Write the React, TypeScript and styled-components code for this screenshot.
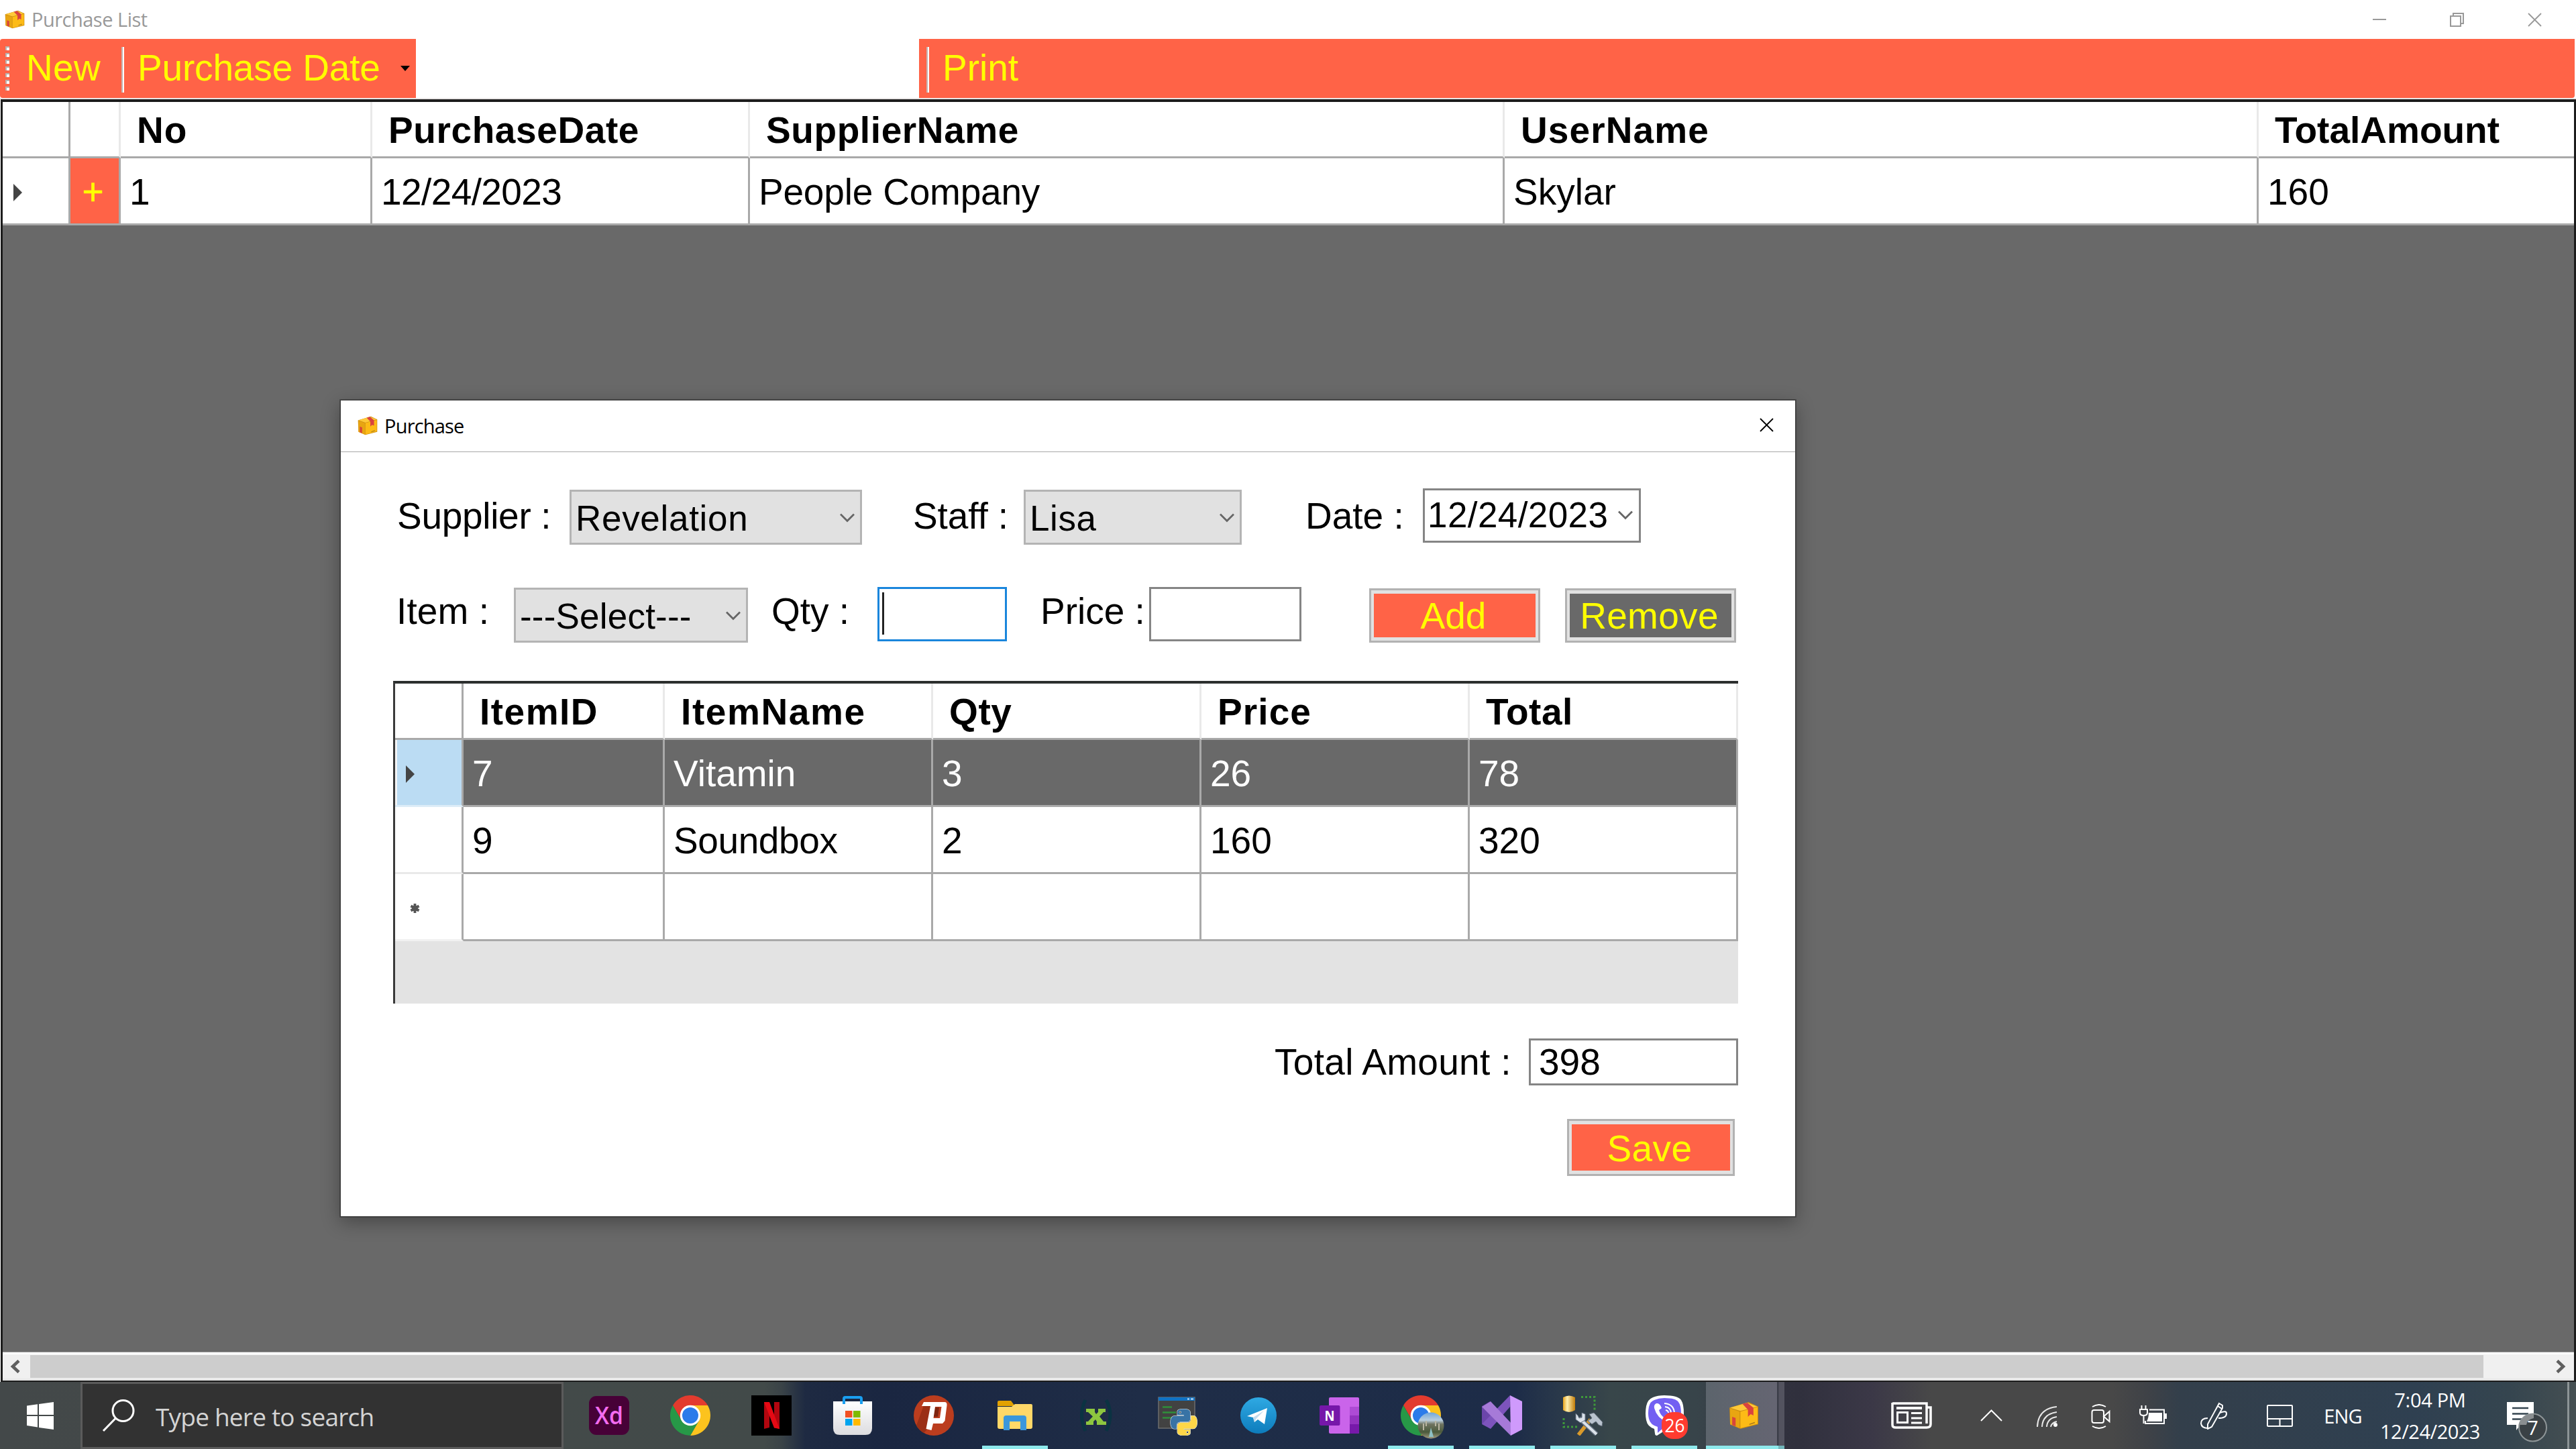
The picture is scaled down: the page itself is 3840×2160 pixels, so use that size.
import React from "react";
import styled, { createGlobalStyle, css } from "styled-components";

const TOMATO = "#ff6347";
const DIM = "#696969";
const LINE = "#a9a9a9";

const GlobalStyle = createGlobalStyle`
  *, *::before, *::after { box-sizing: border-box; }
  html, body { margin: 0; padding: 0; background: #fff; overflow: hidden; }
  body { font-family: "Liberation Sans", Arial, sans-serif; color: #000; }
`;

const Screen = styled.div`
  position: relative;
  width: 3840px;
  height: 2160px;
  display: flex;
  flex-direction: column;
  overflow: hidden;
  background: #fff;
`;

const Txt = styled.span<{ $ls?: number; $size?: number }>`
  font-size: ${(p) => p.$size ?? 55}px;
  line-height: 1;
  letter-spacing: ${(p) => p.$ls ?? 0}px;
  white-space: pre;
`;

const UiTxt = styled(Txt)`
  font-family: "Open Sans", "Noto Sans", sans-serif;
`;

/* ---------- main window ---------- */

const TitleBar = styled.header`
  display: flex;
  align-items: center;
  height: 58px;
  padding: 0 51px 0 7px;
  color: #999;
`;

const TitleText = styled(UiTxt)<{ $gap: number }>`
  margin-left: ${(p) => p.$gap}px;
  line-height: 40px;
`;

const WindowButtons = styled.div`
  display: flex;
  align-items: center;
  gap: 95px;
  margin-left: auto;
`;

const ToolRow = styled.div`
  display: flex;
  justify-content: space-between;
  height: 90px;
  padding: 0 2px 2px 0;
  background: linear-gradient(#fff 88px, #e9e6e6 88px);
`;

const ToolGroup = styled.div<{ $w: number; $first?: boolean }>`
  display: flex;
  align-items: center;
  width: ${(p) => p.$w}px;
  height: 88px;
  background: ${TOMATO};
  color: #ff0;
  border-radius: ${(p) => (p.$first ? "4px 0 0 4px" : "0 0 4px 0")};
`;

const Grip = styled.div`
  display: flex;
  flex-direction: column;
  gap: 4px;
  width: 7px;
  margin-left: 8px;
`;

const GripDot = styled.i`
  width: 6px;
  height: 6px;
  background: #fff;
  border-top: 2px solid #b9b1ae;
  border-left: 2px solid #b9b1ae;
`;

const ToolSep = styled.i<{ $ml: number }>`
  width: 4px;
  height: 68px;
  margin: 4px 0 0 ${(p) => p.$ml}px;
  background: #fff;
  border-left: 2px solid #c4b5b1;
`;

const ToolItem = styled(Txt)<{ $ml: number }>`
  margin-left: ${(p) => p.$ml}px;
  padding-bottom: 1px;
`;

const DropArrow = styled.i`
  margin: 0 9px 0 auto;
  border: 7px solid transparent;
  border-top: 8px solid #000;
  border-bottom: 0;
`;

const Client = styled.main`
  flex: none;
  display: flex;
  flex-direction: column;
  height: 1912px;
  margin-left: 1px;
  border: solid #1c1c1c;
  border-width: 4px 3px 2px 3px;
  background: ${DIM};
`;

const GridRow = styled.div<{ $h: number; $cols: string; $selected?: boolean }>`
  display: grid;
  grid-template-columns: ${(p) => p.$cols};
  height: ${(p) => p.$h}px;
  color: ${(p) => (p.$selected ? "#fff" : "#000")};
  background: ${(p) => (p.$selected ? DIM : "#fff")};
`;

const Cell = styled.div<{ $noEdge?: boolean }>`
  display: flex;
  align-items: center;
  padding: 4px 0 0 13px;
  border-right: ${(p) => (p.$noEdge ? 0 : 3)}px solid ${LINE};
  border-bottom: 3px solid ${LINE};
`;

const HeadCell = styled(Cell)<{ $strong?: boolean }>`
  padding: 3px 0 0 24px;
  font-weight: bold;
  border-right-color: ${(p) => (p.$strong ? LINE : "#e9e9e9")};
`;

const RowHead = styled(Cell)<{ $blue?: boolean; $line?: string; $pad: number }>`
  padding-left: ${(p) => p.$pad}px;
  background: ${(p) => (p.$blue ? "#bbdcf3" : "#fff")};
  border-bottom-color: ${(p) => p.$line ?? LINE};
  ${(p) =>
    p.$blue &&
    css`
      border-bottom-color: #dcecf7;
      box-shadow: inset 3px 0 #f4f4f4;
    `}
`;

const PlusCell = styled(Cell)`
  justify-content: center;
  padding: 4px 5px 0 0;
  background: ${TOMATO};
  color: #ff0;
  -webkit-text-stroke: 0.6px #ff0;
`;

const RowMarker = styled.i`
  width: 0;
  height: 0;
  border: 13px solid transparent;
  border-left: 13px solid #444;
  border-right: 0;
`;

const ScrollBar = styled.div`
  display: flex;
  height: 43px;
  margin-top: auto;
  padding: 4px 0 4px;
  border-top: 1px solid #a0a0a0;
  background: #f0f0f0;
  box-shadow: inset 0 3px #fff, inset 0 -3px #e6e6e6;
`;

const ScrollButton = styled.div<{ $back?: boolean }>`
  display: flex;
  align-items: center;
  justify-content: center;
  width: 41px;
  padding-right: ${(p) => (p.$back ? 3 : 0)}px;
`;

const Thumb = styled.div`
  width: 3657px;
  background: #cdcdcd;
`;

const Trough = styled.div`
  flex: 1;
`;

/* ---------- purchase dialog ---------- */

const Dialog = styled.section`
  position: absolute;
  left: 507px;
  top: 596px;
  width: 2170px;
  height: 1218px;
  display: flex;
  flex-direction: column;
  background: #fff;
  border: 1px solid #3c3c3c;
  box-shadow: 0 0 0 1px rgba(50, 50, 50, 0.5), 0 8px 26px rgba(0, 0, 0, 0.32);
`;

const DialogTitle = styled.header`
  display: flex;
  align-items: center;
  height: 77px;
  padding: 0 32px 1px 25px;
  border-bottom: 1px solid #a8a8a8;
`;

const DialogClose = styled.div`
  margin-left: auto;
  margin-bottom: 3px;
  display: flex;
`;

const DialogBody = styled.div`
  display: flex;
  flex-direction: column;
  padding: 53px 85px 0 78px;
`;

const FormRow = styled.div<{ $h: number; $mt?: number }>`
  display: flex;
  align-items: center;
  height: ${(p) => p.$h}px;
  margin-top: ${(p) => p.$mt ?? 0}px;
`;

const Label = styled(Txt)<{ $w: number; $ml: number; $lift: number }>`
  flex: none;
  width: ${(p) => p.$w}px;
  margin-left: ${(p) => p.$ml}px;
  padding-bottom: ${(p) => p.$lift}px;
`;

const Select = styled.div<{ $w: number }>`
  flex: none;
  display: flex;
  align-items: center;
  justify-content: space-between;
  width: ${(p) => p.$w}px;
  height: 82px;
  padding: 2px 8px 0 6px;
  border: 3px solid #b4b4b4;
  background: #e1e1e1;
`;

const DatePicker = styled(Select)`
  height: 81px;
  margin-bottom: 6px;
  padding: 0 9px 1px 4px;
  background: #fff;
  border-color: #858585;
`;

const Input = styled.div<{ $w: number; $h?: number; $focus?: boolean }>`
  flex: none;
  display: flex;
  align-items: center;
  width: ${(p) => p.$w}px;
  height: ${(p) => p.$h ?? 81}px;
  margin-bottom: ${(p) => (p.$h ? 0 : 3)}px;
  padding: ${(p) => (p.$h ? "1px 0 0 12px" : "0 0 0 4px")};
  border: 3px solid ${(p) => (p.$focus ? "#1a86dc" : "#858585")};
  background: #fff;
`;

const Caret = styled.i`
  width: 3px;
  height: 63px;
  margin-bottom: 3px;
  background: #222;
`;

const Button = styled.div<{ $w: number; $h: number; $ml?: number; $dark?: boolean }>`
  flex: none;
  display: flex;
  width: ${(p) => p.$w}px;
  height: ${(p) => p.$h}px;
  margin-left: ${(p) => p.$ml ?? 0}px;
  padding: 5px 4px;
  border: 3px solid #b2b2b2;
  background: #e1e1e1;

  > span {
    flex: 1;
    display: flex;
    align-items: center;
    justify-content: center;
    padding: 3px 4px 0 0;
    color: #ff0;
    background: ${(p) => (p.$dark ? DIM : TOMATO)};
  }
`;

const ItemTable = styled.div`
  height: 481px;
  margin-top: 53px;
  border-left: 3px solid #3a3a3a;
  border-top: 4px solid #2c2f2e;
  background: #e3e3e3;
`;

const TotalRow = styled.div`
  display: flex;
  align-items: center;
  justify-content: flex-end;
  height: 70px;
  margin-top: 52px;
`;

const SaveRow = styled.div`
  display: flex;
  justify-content: flex-end;
  margin-top: 50px;
  padding-right: 5px;
`;

/* ---------- taskbar ---------- */

const TaskBar = styled.footer`
  flex: none;
  display: flex;
  height: 100px;
  color: #fff;
  background: linear-gradient(
    90deg,
    #434849 0,
    #444a49 500px,
    #424a49 1140px,
    #3a4347 1165px,
    #1e2a42 1200px,
    #1a2641 1320px,
    #1f2d47 1700px,
    #1d2c48 2260px,
    #27364a 2310px,
    #38464a 2400px,
    #38444a 2530px,
    #34343f 2600px,
    #30303d 2680px,
    #3b3847 2790px,
    #484848 2880px,
    #484848 3150px,
    #3f4247 3200px,
    #333f4b 3250px,
    #2f4051 3600px,
    #35454f 3740px,
    #454f52 3840px
  );
`;

const StartButton = styled.div`
  display: flex;
  align-items: center;
  width: 120px;
  padding-left: 40px;
`;

const SearchBox = styled.div`
  display: flex;
  align-items: center;
  width: 720px;
  padding-left: 29px;
  border: 3px solid #5b5b5b;
  background: #323232;
  color: #d4d4d4;
`;

const SearchText = styled(UiTxt)`
  margin-left: 30px;
  line-height: 60px;
  padding-top: 4px;
`;

const Apps = styled.div`
  display: flex;
  margin-left: 7.5px;
`;

const TaskApp = styled.div<{ $open?: boolean; $active?: boolean }>`
  display: flex;
  align-items: center;
  justify-content: center;
  width: 121px;
  height: 100px;
  ${(p) =>
    p.$open &&
    css`
      background: linear-gradient(#8ee9ec, #8ee9ec) center bottom / 98px 5px no-repeat;
    `}
  ${(p) =>
    p.$active &&
    css`
      padding-right: 5px;
      background: linear-gradient(#8ee9ec, #8ee9ec) 1px 100% / 108px 5px no-repeat,
        linear-gradient(#72b6bb, #72b6bb) 109px 100% / 9px 5px no-repeat,
        linear-gradient(90deg, transparent 1px, #5c646c 1px, #656572 107px, #3c3e49 107px, #3c3e49 109px, #53535f 110px, #53535f 118px, transparent 118px);
    `}
`;

const TrayItem = styled.div<{ $ml: number; $w: number; $mt?: number }>`
  flex: none;
  display: flex;
  align-items: center;
  justify-content: center;
  width: ${(p) => p.$w}px;
  margin-left: ${(p) => p.$ml}px;
  padding-top: ${(p) => p.$mt ?? 0}px;
`;

const Clock = styled(TrayItem)`
  flex-direction: column;
  gap: 7px;
  padding-top: 1px;
`;

const ClockLine = styled(UiTxt)`
  line-height: 40px;
`;

const PeekBar = styled.i`
  width: 3px;
  margin-left: auto;
  margin-right: 10px;
  background: #8c9496;
`;

/* ---------- drawings ---------- */

const BoxIcon = ({ w, h }: { w: number; h: number }) => (
  <svg width={w} height={h} viewBox="0 0 44 44" preserveAspectRatio="none">
    <path d="M1 10 L29 1 L43 8 L43 36 L17 43 L2 36Z" fill="#c98a12" />
    <path d="M2 10 L27 2 L42 8 L17 15Z" fill="#ffc938" />
    <path d="M2 11 L16 16 L16 42 L2 36Z" fill="#e8a512" />
    <path d="M17 16 L42 9 L42 35 L17 42Z" fill="#fdbb16" />
    <path d="M20 4 L27 2 L36 10 L36 22 L32 20 L28 24 L28 13Z" fill="#d9433f" />
    <path d="M5 24 L10 26 L10 39 L5 37Z" fill="#d8453c" />
    <path d="M30 36 L38 33" stroke="#a9791a" strokeWidth="1.5" />
  </svg>
);

const CloseX = ({ color }: { color: string }) => (
  <svg width="21" height="21" viewBox="0 0 21 21">
    <path d="M1 1 L20 20 M20 1 L1 20" stroke={color} strokeWidth="1.8" fill="none" />
  </svg>
);

const Chevron = () => (
  <svg width="22" height="14" viewBox="0 0 22 14">
    <path d="M1 1.5 L11 11.5 L21 1.5" stroke="#666" strokeWidth="2.8" fill="none" />
  </svg>
);

const ScrollArrow = ({ right }: { right?: boolean }) => (
  <svg width="18" height="20" viewBox="0 0 18 20">
    <path
      d={right ? "M4 1.5 L13 10 L4 18.5" : "M14 1.5 L5 10 L14 18.5"}
      stroke="#5f5f5f"
      strokeWidth="4.6"
      fill="none"
    />
  </svg>
);

const Asterisk = () => (
  <svg width="15" height="16" viewBox="0 0 15 16">
    <circle cx="7.5" cy="8" r="4.5" fill="#555" />
    <path d="M7.5 1 V15 M1.5 4.5 L13.5 11.5 M13.5 4.5 L1.5 11.5" stroke="#555" strokeWidth="3.8" />
  </svg>
);

const ChromeShape = () => (
  <g>
    <path d="M4 15 A30 30 0 0 1 56 15 L30 15 L17 37.5Z" fill="#e33b2e" />
    <path d="M56 15 A30 30 0 0 1 30 60 L43 37.5 L30 15Z" fill="#fcc31e" />
    <path d="M30 60 A30 30 0 0 1 4 15 L17 37.5 L43 37.5Z" fill="#279847" />
    <circle cx="30" cy="30" r="15.2" fill="#fff" />
    <circle cx="30" cy="30" r="12" fill="#2b7bea" />
  </g>
);

const XdIcon = () => (
  <svg width="60" height="60" viewBox="0 0 60 60">
    <rect y="1" width="60" height="58" rx="11" fill="#470137" />
    <text
      x="30"
      y="43"
      textAnchor="middle"
      textLength="42"
      lengthAdjust="spacingAndGlyphs"
      fontFamily="Open Sans, sans-serif"
      fontWeight="600"
      fontSize="36"
      fill="#f36cf0"
    >
      Xd
    </text>
  </svg>
);

const NetflixIcon = () => (
  <svg width="60" height="60" viewBox="0 0 60 60">
    <rect width="60" height="60" fill="#000" />
    <path d="M19 10 H27 V48 L19 50Z M34 10 H42 V50 L34 48Z" fill="#b1060f" />
    <path d="M19 10 H27 L42 50 L34 48.5Z" fill="#e50914" />
  </svg>
);

const StoreIcon = () => (
  <svg width="60" height="60" viewBox="0 0 60 60">
    <defs>
      <linearGradient id="bag" x1="0" y1="0" x2="0" y2="1">
        <stop offset="0" stopColor="#fff" />
        <stop offset="1" stopColor="#dcdcdf" />
      </linearGradient>
    </defs>
    <path d="M1 9 H59 V49 Q59 59 49 59 H11 Q1 59 1 49Z" fill="url(#bag)" />
    <path d="M17 13 V5 Q17 3 19 3 H41 Q43 3 43 5 V13" stroke="#1a9ff0" strokeWidth="4" fill="none" />
    <rect x="19" y="23" width="10.5" height="10" fill="#f25022" />
    <rect x="31" y="23" width="10.5" height="10" fill="#7fba00" />
    <rect x="19" y="35" width="10.5" height="10" fill="#00a4ef" />
    <rect x="31" y="35" width="10.5" height="10" fill="#ffb900" />
  </svg>
);

const PIcon = () => (
  <svg width="60" height="60" viewBox="0 0 60 60">
    <circle cx="30" cy="30" r="30" fill="#bb3d1e" />
    <path d="M15 15 L4 45 Q8 52 15 56 L22 49 L27 15Z" fill="#9b2f15" />
    <path d="M29 18 H38 L36 32 H27Z" fill="#7e2510" />
    <path
      fillRule="evenodd"
      d="M15 10 H46 Q50 10 49.500 15 L46.500 38 L43 42 H29 L26.500 52 L18.500 50 L25 16 H12Z M32 17 L29.500 34 H39 L41.500 17Z"
      fill="#fff"
    />
  </svg>
);

const FolderIcon = () => (
  <svg width="54" height="46" viewBox="0 0 54 46">
    <path d="M1 3 Q1 1 3 1 H21 L27 9 H1Z" fill="#e3a200" />
    <path d="M1 10 L22 10 L27 6 H51 Q53 6 53 8 V40 Q53 43 50 43 H4 Q1 43 1 40Z" fill="#ffd868" />
    <path d="M10 45 V27 Q10 23 14 23 H40 Q44 23 44 27 V45 H35 V32 H19 V45Z" fill="#3a97dc" />
  </svg>
);

const GreenXIcon = () => (
  <svg width="60" height="60" viewBox="0 0 60 60">
    <path d="M14 7 Q3 29 14 53 M45 7 Q57 29 45 53" stroke="#0b3342" strokeWidth="5" fill="none" />
    <path
      d="M15 20 H28 V25 L30 28 L33 25 V20 H44 V25 H41 L35 31.500 L41 39 H45 V44 H31 V39 L29 36 L26 39 V44 H15 V39 H18 L25 31.500 L18 25 H15Z"
      fill="#8dc63f"
    />
  </svg>
);

const PY_PATH =
  "M14.25.18l.9.2.73.26.59.3.45.32.34.34.25.34.16.33.1.3.04.26.02.2-.01.13V8.5l-.05.63-.13.55-.21.46-.26.38-.3.31-.33.25-.35.19-.35.14-.33.1-.3.07-.26.04-.21.02H8.77l-.69.05-.59.14-.5.22-.41.27-.33.32-.27.35-.2.36-.15.37-.1.35-.07.32-.04.27-.02.21v3.06H3.17l-.21-.03-.28-.07-.32-.12-.35-.18-.36-.26-.36-.36-.35-.46-.32-.59-.28-.73-.21-.88-.14-1.05-.05-1.23.06-1.22.16-1.04.24-.87.32-.71.36-.57.4-.44.42-.33.42-.24.4-.16.36-.1.32-.05.24-.01h.16l.06.01h8.16v-.83H6.18l-.01-2.75-.02-.37.05-.34.11-.31.17-.28.25-.26.31-.23.38-.2.44-.18.51-.15.58-.12.64-.1.71-.06.77-.04.84-.02 1.27.05zm-6.3 1.98l-.23.33-.08.41.08.41.23.34.33.22.41.09.41-.09.33-.22.23-.34.08-.41-.08-.41-.23-.33-.33-.22-.41-.09-.41.09z";

const PythonIcon = () => (
  <svg width="60" height="60" viewBox="0 0 60 60">
    <rect x="2" y="3" width="54" height="46" fill="#424242" stroke="#6d6d6d" strokeWidth="1.500" />
    <rect x="2" y="3" width="54" height="5" fill="#0f72c4" />
    <path d="M45 5.500 h3 M50 5.500 h4" stroke="#cfe4f6" strokeWidth="2" />
    <path d="M8 17.500 H22 M8 25.500 H28 M8 33.500 H22" stroke="#2f8f3a" strokeWidth="2.600" />
    <g transform="translate(20 20.500) scale(1.640)" stroke="#e8eef2" strokeWidth="0.700" paintOrder="stroke">
      <path d={PY_PATH} fill="#3873a5" />
      <path d={PY_PATH} fill="#ffd748" transform="rotate(180 12 12)" />
    </g>
  </svg>
);

const TelegramIcon = () => (
  <svg width="54" height="54" viewBox="0 0 54 54">
    <defs>
      <linearGradient id="tg" x1="0" y1="0" x2="0" y2="1">
        <stop offset="0" stopColor="#2fa9e3" />
        <stop offset="1" stopColor="#0d7cbc" />
      </linearGradient>
    </defs>
    <circle cx="27" cy="27" r="27" fill="url(#tg)" />
    <path d="M10 28 L40 16 L36 40 L26 33 L21 37 L19 30Z" fill="#fff" />
    <path d="M19 30 L35 20 L23.500 32 L21 37Z" fill="#c3dcee" />
  </svg>
);

const OneNoteIcon = () => (
  <svg width="60" height="54" viewBox="0 0 60 54">
    <rect x="14" width="45" height="54" rx="2" fill="#ca64ea" />
    <rect x="45" y="14" width="14" height="13" fill="#ae4bd5" />
    <rect x="45" y="27" width="14" height="13" fill="#9332bf" />
    <path d="M45 40 H59 V52 Q59 54 57 54 H45Z" fill="#7719aa" />
    <rect y="12" width="30.500" height="30" rx="2" fill="#7617a9" />
    <text
      x="15"
      y="34.500"
      textAnchor="middle"
      textLength="15"
      lengthAdjust="spacingAndGlyphs"
      fontFamily="Open Sans, sans-serif"
      fontWeight="700"
      fontSize="22"
      fill="#fff"
    >
      N
    </text>
  </svg>
);

const ChromeIcon = () => (
  <svg width="60" height="60" viewBox="0 0 60 60">
    <ChromeShape />
  </svg>
);

const ChromeProfileIcon = () => (
  <svg width="60" height="60" viewBox="0 0 60 60" overflow="visible">
    <defs>
      <linearGradient id="avatar" x1="0" y1="0" x2="0" y2="1">
        <stop offset="0" stopColor="#6fa6dc" />
        <stop offset=".3" stopColor="#b9cede" />
        <stop offset=".45" stopColor="#6f7360" />
        <stop offset=".75" stopColor="#4b5a3c" />
        <stop offset="1" stopColor="#a39b80" />
      </linearGradient>
    </defs>
    <ChromeShape />
    <circle cx="45" cy="45" r="19.500" fill="url(#avatar)" />
    <path d="M34 42 V52 M38 38 V46 M52 38 V46 M57 42 V52" stroke="#b9b5a2" strokeWidth="2" />
    <path d="M42 62 L45 48 L49 62Z" fill="#8fc0c4" />
  </svg>
);

const VisualStudioIcon = () => (
  <svg width="60" height="60" viewBox="0 0 60 60">
    <path d="M0 16 L12 9 L0 42Z" fill="#52308f" />
    <path d="M0 16 L13 27 V34 L0 43Z" fill="#6b45ab" />
    <path d="M0 43 L42 0 V17 L13 50Z" fill="#7d54bd" />
    <path d="M0 17 L13 9 L46 44 L43 60Z" fill="#a67ad8" />
    <path d="M42 0 L60 9 V51 L43 60Z" fill="#cf9afc" />
  </svg>
);

const SqlToolsIcon = () => (
  <svg width="62" height="60" viewBox="0 0 62 60">
    <defs>
      <linearGradient id="cyl" x1="0" x2="1">
        <stop offset="0" stopColor="#e7a21a" />
        <stop offset=".35" stopColor="#fff0b0" />
        <stop offset="1" stopColor="#c27c08" />
      </linearGradient>
    </defs>
    <path d="M1 3 Q10 -2 19 3 V22 Q10 28 1 22Z" fill="url(#cyl)" />
    <path d="M28 2.500 H48 V22 M2 34 V47 H22" stroke="#3f9a3a" strokeWidth="3" strokeDasharray="3 3" fill="none" />
    <path d="M24 59 L42 36" stroke="#d99a2b" strokeWidth="5.500" />
    <path d="M40 28 L47 26 L60 40 L59 46 L54 44 L50 39 L44 43 L38 38 L44 34Z" fill="#b9c3cf" stroke="#5f6b78" />
    <path d="M25 34 L51 58" stroke="#667383" strokeWidth="7" />
    <path d="M25 34 L51 58" stroke="#dbe2ea" strokeWidth="4" />
    <path d="M20 27 V36 L27 41 L34 37 L34 28 L29 26 L29 33 L25 34 L23 30Z" fill="#dbe2ea" stroke="#667383" />
  </svg>
);

const ViberIcon = () => (
  <svg width="60" height="60" viewBox="0 0 60 60" overflow="visible">
    <path
      d="M30 0 Q50 0 55 7 Q59 13 59 27 Q59 41 54 47 Q48 53 30 53 L19 60 Q16 60 16 57 L15 50 Q5 47 3 37 Q1 27 3 16 Q5 6 13 3 Q20 0 30 0Z"
      fill="#fff"
    />
    <path
      d="M30 4 Q47 4 51 10 Q55 15 55 27 Q55 38 50 43 Q45 48 29 48 L20 56 V47 Q9 44 7 35 Q5 27 7 17 Q9 9 15 7 Q22 4 30 4Z"
      fill="#7360f2"
    />
    <path
      d="M18 12 Q14 14 15 19 Q19 34 34 40 Q39 42 41 36 Q40 32 34 31 L31 34 Q24 30 22 22 L26 19 Q24 13 20 12Z"
      fill="#fff"
    />
    <path
      d="M30 12 Q45 13 45 28 M31 17 Q40 18 40 27 M32 22 Q36 23 36 26"
      stroke="#fff"
      strokeWidth="2"
      fill="none"
    />
    <rect x="26" y="25" width="39" height="40" rx="17" fill="#ff3b30" />
    <text
      x="45.500"
      y="55"
      textAnchor="middle"
      textLength="30"
      lengthAdjust="spacingAndGlyphs"
      fontFamily="Open Sans, sans-serif"
      fontSize="28"
      fill="#fff"
    >
      26
    </text>
  </svg>
);

const NewsIcon = () => (
  <svg width="61" height="41" viewBox="0 0 61 41" fill="none" stroke="#fff">
    <path d="M2 2 H53 V32 M2 1 V34 Q2 38 7 38 H53 Q59 38 59 33 V8 H53" strokeWidth="3.500" />
    <path d="M8 9 H46" strokeWidth="4" />
    <rect x="9.500" y="15.500" width="15" height="15" strokeWidth="3" />
    <path d="M30 16.500 H46 M30 24 H46 M30 31 H46" strokeWidth="3" />
  </svg>
);

const TrayChevron = () => (
  <svg width="33" height="18" viewBox="0 0 33 18" fill="none">
    <path d="M1 17 L16.500 1.500 L32 17" stroke="#fff" strokeWidth="2" />
  </svg>
);

const WifiIcon = () => (
  <svg width="32" height="32" viewBox="0 0 32 32" fill="none" stroke="#e8e8e8" strokeWidth="2">
    <path d="M1 31 Q2 4 30 1" />
    <path d="M8 31 Q9 12 30 9" />
    <path d="M15 31 Q16 18 30 16" />
    <path d="M21 31 Q22 25 30 23" />
    <circle cx="28" cy="28" r="3" fill="#fff" stroke="none" />
  </svg>
);

const CameraIcon = () => (
  <svg width="30" height="37" viewBox="0 0 30 37" fill="none" stroke="#fff" strokeWidth="2">
    <rect x="1.500" y="9" width="17.500" height="19" rx="3" />
    <path d="M19 18.500 L27.500 11 V26Z" />
    <path d="M2 4 Q12 -2 22 4 M2 33 Q12 39 22 33" />
  </svg>
);

const BatteryIcon = () => (
  <svg width="42" height="30" viewBox="0 0 42 30" fill="none" stroke="#fff">
    <path d="M15 6.500 H37 V27 H9 V23" strokeWidth="2" />
    <path d="M39.500 12 V20" strokeWidth="3" />
    <path d="M14 11 H34 V24 H11 Q14 19 14 11Z" fill="#fff" stroke="none" />
    <path d="M1 6 H12 V11 Q12 15 6.500 15 Q1 15 1 11Z" strokeWidth="2" />
    <path d="M3.500 0 V6 M9.500 0 V6 M6.500 15 V27" strokeWidth="2" />
  </svg>
);

const PenIcon = () => (
  <svg width="42" height="41" viewBox="0 0 42 41" fill="none" stroke="#fff" strokeWidth="2">
    <path d="M29 2 L34 5 V9 L18 37 L12 40 L12 33Z M27 6 L33 10" />
    <path d="M12 24 Q2 24 2 32 Q3 39 12 39 M30 16 Q40 12 40 17 Q40 24 28 24" />
  </svg>
);

const TouchpadIcon = () => (
  <svg width="40" height="33" viewBox="0 0 40 33" fill="none" stroke="#fff" strokeWidth="2">
    <rect x="1" y="1" width="37" height="31" rx="1" />
    <path d="M1 21 H38 M19.500 21 V32" />
  </svg>
);

const NotificationIcon = () => (
  <svg width="62" height="62" viewBox="0 0 62 62">
    <path d="M0 0 H40 V34 H20 L14 42 V34 H0Z" fill="#fff" />
    <path d="M8 9 H32 M8 17.500 H32 M8 25.500 H24" stroke="#34444f" strokeWidth="2.600" />
    <circle cx="38.500" cy="38" r="20.500" fill="#3a4145" stroke="#8e9597" strokeWidth="2" />
    <path d="M19 34 A20 20 0 0 1 40 18 V24 Q30 26 29 34Z" fill="#8a8e90" />
    <text x="38.500" y="49" textAnchor="middle" fontFamily="Open Sans, sans-serif" fontSize="29" fill="#fff">
      7
    </text>
  </svg>
);

/* ---------- data ---------- */

const MAIN_COLS = "101px 75px 375px 563px 1125px 1124px 1fr";
const ITEM_COLS = "102px 300px 400px 400px 400px 400px";

const mainHeads: [string, number][] = [
  ["No", 1],
  ["PurchaseDate", 0.6],
  ["SupplierName", 0.6],
  ["UserName", 1.1],
  ["TotalAmount", 0],
];
const mainRow: [string, number][] = [
  ["1", 0],
  ["12/24/2023", -0.6],
  ["People Company", -0.2],
  ["Skylar", 0],
  ["160", 0],
];
const itemHeads: [string, number][] = [
  ["ItemID", 1.5],
  ["ItemName", 1.6],
  ["Qty", 0.6],
  ["Price", 1.1],
  ["Total", 0.5],
];
const itemRows: string[][] = [
  ["7", "Vitamin", "3", "26", "78"],
  ["9", "Soundbox", "2", "160", "320"],
  ["", "", "", "", ""],
];

export default function App() {
  return (
    <Screen>
      <GlobalStyle />
      <TitleBar>
        <BoxIcon w={30} h={28} />
        <TitleText $size={29} $ls={-0.5} $gap={10}>
          Purchase List
        </TitleText>
        <WindowButtons>
          <svg width="20" height="20" viewBox="0 0 20 20">
            <path d="M0 10 H20" stroke="#999" strokeWidth="2" />
          </svg>
          <svg width="21" height="21" viewBox="0 0 21 21" fill="none" stroke="#999" strokeWidth="2">
            <path d="M1 5 H16 V20 H1Z M5 5 V1 H20 V16 H16" />
          </svg>
          <CloseX color="#999" />
        </WindowButtons>
      </TitleBar>

      <ToolRow>
        <ToolGroup $w={620} $first>
          <Grip>
            {Array.from({ length: 7 }, (_, i) => (
              <GripDot key={i} />
            ))}
          </Grip>
          <ToolItem $ml={24} $ls={0.3}>
            New
          </ToolItem>
          <ToolSep $ml={31} />
          <ToolItem $ml={20} $ls={-0.15}>
            Purchase Date
          </ToolItem>
          <DropArrow />
        </ToolGroup>
        <ToolGroup $w={2468}>
          <ToolSep $ml={11} />
          <ToolItem $ml={20}>Print</ToolItem>
        </ToolGroup>
      </ToolRow>

      <Client>
        <GridRow $h={84} $cols={MAIN_COLS}>
          <HeadCell $strong />
          <HeadCell />
          {mainHeads.map(([t, ls], i) => (
            <HeadCell key={t} $noEdge={i === 4}>
              <Txt $ls={ls}>{t}</Txt>
            </HeadCell>
          ))}
        </GridRow>
        <GridRow $h={100} $cols={MAIN_COLS}>
          <RowHead $pad={16}>
            <RowMarker />
          </RowHead>
          <PlusCell>
            <Txt>+</Txt>
          </PlusCell>
          {mainRow.map(([t, ls], i) => (
            <Cell key={t} $noEdge={i === 4}>
              <Txt $ls={ls}>{t}</Txt>
            </Cell>
          ))}
        </GridRow>
        <ScrollBar>
          <ScrollButton $back>
            <ScrollArrow />
          </ScrollButton>
          <Thumb />
          <Trough />
          <ScrollButton>
            <ScrollArrow right />
          </ScrollButton>
        </ScrollBar>
      </Client>

      <TaskBar>
        <StartButton>
          <svg width="40" height="41" viewBox="0 0 40 41" fill="#fff">
            <path d="M0 5.500 L16 3.200 V19 H0Z M18 3 L40 0 V19 H18Z M0 21 H16 V37.500 L0 35Z M18 21 H40 V41 L18 38Z" />
          </svg>
        </StartButton>
        <SearchBox>
          <svg width="50" height="50" viewBox="0 0 50 50" fill="none" stroke="#fff" strokeWidth="3">
            <circle cx="31.500" cy="18" r="15.500" />
            <path d="M20.500 29 L2 48" />
          </svg>
          <SearchText $size={37} $ls={-0.8}>
            Type here to search
          </SearchText>
        </SearchBox>
        <Apps>
          <TaskApp><XdIcon /></TaskApp>
          <TaskApp><ChromeIcon /></TaskApp>
          <TaskApp><NetflixIcon /></TaskApp>
          <TaskApp><StoreIcon /></TaskApp>
          <TaskApp><PIcon /></TaskApp>
          <TaskApp $open><FolderIcon /></TaskApp>
          <TaskApp><GreenXIcon /></TaskApp>
          <TaskApp><PythonIcon /></TaskApp>
          <TaskApp><TelegramIcon /></TaskApp>
          <TaskApp><OneNoteIcon /></TaskApp>
          <TaskApp $open><ChromeProfileIcon /></TaskApp>
          <TaskApp $open><VisualStudioIcon /></TaskApp>
          <TaskApp $open><SqlToolsIcon /></TaskApp>
          <TaskApp $open><ViberIcon /></TaskApp>
          <TaskApp $active><BoxIcon w={45} h={42} /></TaskApp>
        </Apps>
        <TrayItem $ml={156} $w={61}><NewsIcon /></TrayItem>
        <TrayItem $ml={72} $w={33}><TrayChevron /></TrayItem>
        <TrayItem $ml={51} $w={32} $mt={4}><WifiIcon /></TrayItem>
        <TrayItem $ml={49} $w={30} $mt={2}><CameraIcon /></TrayItem>
        <TrayItem $ml={42} $w={42}><BatteryIcon /></TrayItem>
        <TrayItem $ml={48} $w={42}><PenIcon /></TrayItem>
        <TrayItem $ml={58} $w={40}><TouchpadIcon /></TrayItem>
        <TrayItem $ml={41} $w={66}>
          <UiTxt $size={29} $ls={-0.8}>ENG</UiTxt>
        </TrayItem>
        <Clock $ml={12} $w={170}>
          <ClockLine $size={29} $ls={-0.3}>7:04 PM</ClockLine>
          <ClockLine $size={29} $ls={-0.5}>12/24/2023</ClockLine>
        </Clock>
        <TrayItem $ml={29} $w={62} $mt={22}><NotificationIcon /></TrayItem>
        <PeekBar />
      </TaskBar>

      <Dialog>
        <DialogTitle>
          <BoxIcon w={30} h={29} />
          <TitleText $size={29} $ls={-0.8} $gap={10}>
            Purchase
          </TitleText>
          <DialogClose>
            <CloseX color="#000" />
          </DialogClose>
        </DialogTitle>
        <DialogBody>
          <FormRow $h={88}>
            <Label $ml={6} $w={257} $lift={4} $ls={-0.3}>Supplier :</Label>
            <Select $w={436}>
              <Txt $size={53} $ls={0.7}>Revelation</Txt>
              <Chevron />
            </Select>
            <Label $ml={76} $w={165} $lift={4} $ls={-0.1}>Staff :</Label>
            <Select $w={325}>
              <Txt $size={53} $ls={0.6}>Lisa</Txt>
              <Chevron />
            </Select>
            <Label $ml={95} $w={175} $lift={4}>Date :</Label>
            <DatePicker $w={325}>
              <Txt $size={53} $ls={0.4}>12/24/2023</Txt>
              <Chevron />
            </DatePicker>
          </FormRow>

          <FormRow $h={90} $mt={57}>
            <Label $ml={5} $w={175} $lift={12} $ls={0.1}>Item :</Label>
            <Select $w={349}>
              <Txt $size={53} $ls={0.2}>---Select---</Txt>
              <Chevron />
            </Select>
            <Label $ml={35} $w={158} $lift={12}>Qty :</Label>
            <Input $w={193} $focus>
              <Caret />
            </Input>
            <Label $ml={50} $w={162} $lift={12}>Price :</Label>
            <Input $w={227} />
            <Button $w={255} $h={81} $ml={101}>
              <Txt>Add</Txt>
            </Button>
            <Button $w={255} $h={81} $ml={37} $dark>
              <Txt $ls={0.3}>Remove</Txt>
            </Button>
          </FormRow>

          <ItemTable>
            <GridRow $h={84} $cols={ITEM_COLS}>
              <HeadCell $strong />
              {itemHeads.map(([t, ls]) => (
                <HeadCell key={t}>
                  <Txt $ls={ls}>{t}</Txt>
                </HeadCell>
              ))}
            </GridRow>
            {itemRows.map((row, r) => (
              <GridRow key={r} $h={100} $cols={ITEM_COLS} $selected={r === 0}>
                <RowHead $blue={r === 0} $pad={r === 0 ? 16 : 22} $line={r === 1 ? "#e9e9e9" : "#f1f1f1"}>
                  {r === 0 && <RowMarker />}
                  {r === 2 && <Asterisk />}
                </RowHead>
                {row.map((t, i) => (
                  <Cell key={i}>
                    <Txt $ls={t.length > 7 ? -0.4 : 0}>{t}</Txt>
                  </Cell>
                ))}
              </GridRow>
            ))}
          </ItemTable>

          <TotalRow>
            <Label $ml={0} $w={379} $lift={0} $ls={0.3}>Total Amount :</Label>
            <Input $w={312} $h={70}>
              <Txt>398</Txt>
            </Input>
          </TotalRow>

          <SaveRow>
            <Button $w={250} $h={85}>
              <Txt $ls={0.4}>Save</Txt>
            </Button>
          </SaveRow>
        </DialogBody>
      </Dialog>
    </Screen>
  );
}
